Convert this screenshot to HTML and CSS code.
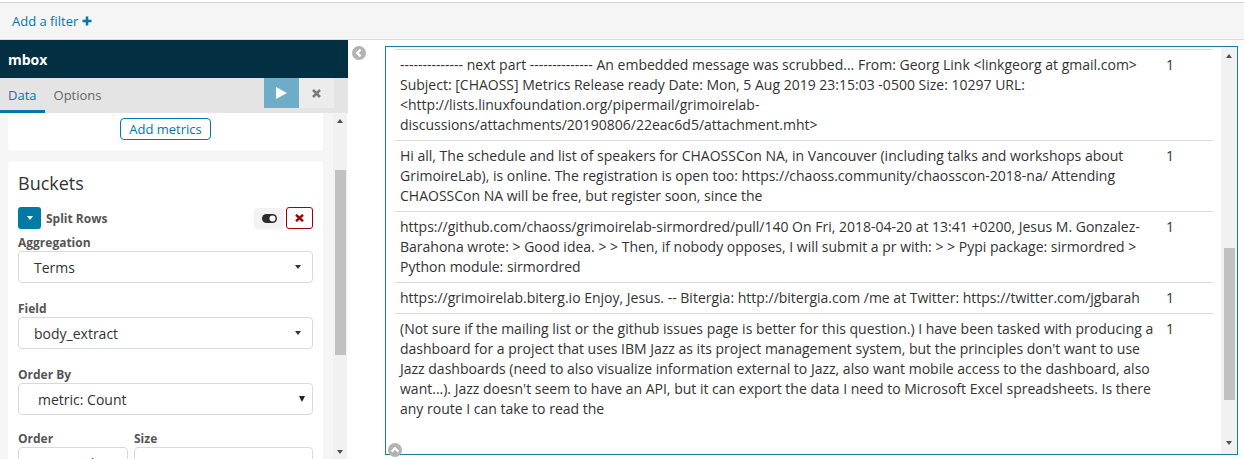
FILE: index.html
```html
<!DOCTYPE html>
<html>
<head>
<meta charset="utf-8">
<title>mbox</title>
<link rel="stylesheet" href="styles.css">
</head>
<body>
<div class="topbar">
  <span class="add-filter">Add a filter
    <svg class="plus-icon" width="10" height="10" viewBox="0 0 10 10"><path d="M5 0.5V9.5M0.5 5H9.5" stroke="#0079a5" stroke-width="2.6"/></svg>
  </span>
</div>
<div class="main">
  <aside class="sidebar">
    <div class="sb-title">mbox</div>
    <div class="sb-tabs">
      <div class="tab active">Data</div>
      <div class="tab">Options</div>
      <div class="spacer"></div>
      <div class="btn-apply"><svg width="11" height="12" viewBox="0 0 11 12"><polygon points="0,0 11,6 0,12" fill="#fff"/></svg></div>
      <div class="btn-discard"><svg width="9" height="9" viewBox="0 0 9 9"><path d="M1 1L8 8M8 1L1 8" stroke="#7a7a7a" stroke-width="2.6"/></svg></div>
    </div>
    <div class="sb-body">
      <div class="sb-scroll">
        <div class="card card-metrics">
          <span class="btn-add">Add metrics</span>
        </div>
        <div class="card card-buckets">
          <h2 class="card-title">Buckets</h2>
          <div class="agg-row">
            <span class="btn-caret"><span class="tri-down-white"></span></span>
            <span class="agg-name">Split Rows</span>
            <span class="spacer"></span>
            <span class="btn-toggle"><svg width="15" height="9" viewBox="0 0 15 9"><rect x="0" y="0" width="15" height="9" rx="4.5" fill="#2b2b2b"/><circle cx="10.5" cy="4.5" r="3" fill="#fff"/></svg></span>
            <span class="btn-remove"><svg width="9" height="8" viewBox="0 0 9 8"><path d="M1 0.8L8 7.2M8 0.8L1 7.2" stroke="#a30000" stroke-width="2.4"/></svg></span>
          </div>
          <div class="form-group first">
            <div class="label">Aggregation</div>
            <div class="select"><span>Terms</span><span class="caret"></span></div>
          </div>
          <div class="form-group">
            <div class="label">Field</div>
            <div class="select"><span>body_extract</span><span class="caret"></span></div>
          </div>
          <div class="form-group">
            <div class="label">Order By</div>
            <div class="select native"><span>metric: Count</span><span class="caret big"></span></div>
          </div>
          <div class="form-row">
            <div class="form-col">
              <div class="label">Order</div>
              <div class="select native"><span>Descending</span><span class="caret big"></span></div>
            </div>
            <div class="form-col">
              <div class="label">Size</div>
              <div class="input"><span>100</span></div>
            </div>
          </div>
        </div>
      </div>
      <div class="scrollbar sb-scrollbar">
        <span class="arrow-box"><span class="tri-up"></span></span>
        <span class="thumb"></span>
        <span class="spacer"></span>
        <span class="arrow-box bottom"><span class="tri-down"></span></span>
      </div>
    </div>
  </aside>
  <section class="content">
    <span class="collapse-icon"><svg width="14" height="14" viewBox="0 0 14 14"><circle cx="7" cy="7" r="7" fill="#b3b3b3"/><path d="M8.6 3.6L5.2 7L8.6 10.4" stroke="#fff" stroke-width="2.2" fill="none"/></svg></span>
    <div class="panel">
      <div class="table-wrap">
        <table class="data-table">
          <colgroup><col><col class="count-col"></colgroup>
          <tbody>
            <tr>
              <td>-------------- next part -------------- An embedded message was scrubbed... From: Georg Link &lt;linkgeorg at gmail.com&gt; Subject: [CHAOSS] Metrics Release ready Date: Mon, 5 Aug 2019 23:15:03 -0500 Size: 10297 URL: &lt;http://lists.linuxfoundation.org/pipermail/grimoirelab-discussions/attachments/20190806/22eac6d5/attachment.mht&gt;</td>
              <td>1</td>
            </tr>
            <tr>
              <td>Hi all, The schedule and list of speakers for CHAOSSCon NA, in Vancouver (including talks and workshops about GrimoireLab), is online. The registration is open too: https://chaoss.community/chaosscon-2018-na/ Attending CHAOSSCon NA will be free, but register soon, since the</td>
              <td>1</td>
            </tr>
            <tr>
              <td>https://github.com/chaoss/grimoirelab-sirmordred/pull/140 On Fri, 2018-04-20 at 13:41 +0200, Jesus M. Gonzalez-Barahona wrote: &gt; Good idea. &gt; &gt; Then, if nobody opposes, I will submit a pr with: &gt; &gt; Pypi package: sirmordred &gt; Python module: sirmordred</td>
              <td>1</td>
            </tr>
            <tr>
              <td>https://grimoirelab.biterg.io Enjoy, Jesus. -- Bitergia: http://bitergia.com /me at Twitter: https://twitter.com/jgbarah</td>
              <td>1</td>
            </tr>
            <tr>
              <td>(Not sure if the mailing list or the github issues page is better for this question.) I have been tasked with producing a dashboard for a project that uses IBM Jazz as its project management system, but the principles don't want to use Jazz dashboards (need to also visualize information external to Jazz, also want mobile access to the dashboard, also want...). Jazz doesn't seem to have an API, but it can export the data I need to Microsoft Excel spreadsheets. Is there any route I can take to read the</td>
              <td>1</td>
            </tr>
          </tbody>
        </table>
      </div>
      <div class="scrollbar panel-scrollbar">
        <span class="arrow-box tall"><span class="tri-up"></span></span>
        <span class="thumb"></span>
        <span class="spacer"></span>
        <span class="arrow-box tall bottom"><span class="tri-down"></span></span>
      </div>
      <span class="expand-icon"><svg width="14" height="14" viewBox="0 0 14 14"><circle cx="7" cy="7" r="7" fill="#b3b3b3"/><path d="M3.6 8.6L7 5.2L10.4 8.6" stroke="#fff" stroke-width="2.2" fill="none"/></svg></span>
    </div>
  </section>
</div>
</body>
</html>
```
FILE: styles.css
```css
* { box-sizing: border-box; }
html, body { margin: 0; height: 100%; }
body {
  font-family: "Open Sans", "DejaVu Sans", sans-serif;
  color: #333;
  background: #fff;
  overflow: hidden;
}
.spacer { flex: 1; }

/* top filter bar */
.topbar {
  margin-top: 2px;
  height: 38px;
  border-top: 1px solid #d4d4d4;
  border-bottom: 1px solid #dadada;
  background: #f5f5f5;
  display: flex;
  align-items: center;
  padding-left: 12px;
}
.add-filter {
  font-size: 13px;
  color: #0079a5;
  display: flex;
  align-items: center;
  gap: 4px;
}
.plus-icon { display: block; }

.main {
  display: flex;
  height: 419px;
}

/* sidebar */
.sidebar {
  width: 348px;
  display: flex;
  flex-direction: column;
}
.sb-title {
  height: 38px;
  background: #022f41;
  color: #fff;
  font-size: 14px;
  font-weight: 700;
  padding-left: 8px;
  display: flex;
  align-items: center;
}
.sb-tabs {
  height: 35px;
  background: #e4e4e4;
  display: flex;
  align-items: flex-start;
  padding-right: 14px;
}
.tab {
  line-height: 35px;
  height: 35px;
  font-size: 13px;
  padding: 0 8px;
  color: #666;
}
.tab.active {
  color: #0079a5;
  box-shadow: inset 0 -3px 0 #0079a5;
  margin-right: 1px;
}
.btn-apply, .btn-discard {
  width: 35px;
  height: 30px;
  display: flex;
  align-items: center;
  justify-content: center;
}
.btn-apply { background: #6eadc7; }
.btn-discard { background: #ececec; }

.sb-body {
  flex: 1;
  display: flex;
  min-height: 0;
}
.sb-scroll {
  width: 333px;
  background: #f5f5f5;
  padding: 0 10px 0 8px;
  overflow: hidden;
}
.card {
  background: #fff;
  border-radius: 4px;
}
.card-metrics {
  border-radius: 0 0 4px 4px;
  padding: 5px 0 11px;
  margin-bottom: 10px;
  display: flex;
  justify-content: center;
}
.btn-add {
  height: 22px;
  line-height: 20px;
  padding: 0 8px;
  font-size: 13px;
  color: #0079a5;
  border: 1px solid #0079a5;
  border-radius: 4px;
  background: #fff;
}
.card-buckets {
  padding: 10px 10px 20px;
}
.card-title {
  margin: 0;
  font-size: 18px;
  line-height: 24px;
  font-weight: 400;
  color: #333;
}
.agg-row {
  margin-top: 12px;
  height: 22px;
  display: flex;
  align-items: center;
}
.btn-caret {
  width: 23px;
  height: 22px;
  background: #0079a5;
  border-radius: 3px;
  display: flex;
  align-items: center;
  justify-content: center;
}
.tri-down-white {
  width: 0; height: 0;
  border-left: 3.5px solid transparent;
  border-right: 3.5px solid transparent;
  border-top: 4px solid #fff;
}
.agg-name {
  margin-left: 5px;
  font-size: 12px;
  font-weight: 700;
  color: #555;
}
.btn-toggle {
  width: 30px;
  height: 21px;
  background: #f2f2f2;
  border-radius: 3px;
  display: flex;
  align-items: center;
  justify-content: center;
}
.btn-remove {
  margin-left: 2px;
  width: 27px;
  height: 22px;
  border: 1px solid #a30000;
  border-radius: 3px;
  display: flex;
  align-items: center;
  justify-content: center;
  background: #fff;
}
.form-group { margin-top: 17px; }
.form-group.first { margin-top: 5px; }
.label {
  font-size: 12px;
  line-height: 17px;
  font-weight: 700;
  color: #555;
}
.select, .input {
  height: 32px;
  border: 1px solid #d9d9d9;
  border-radius: 4px;
  display: flex;
  align-items: center;
  justify-content: space-between;
  padding: 0 11px 0 15px;
  font-size: 14px;
  color: #333;
}
.select.native { padding: 0 7px 0 19px; }
.input { padding-left: 16px; }
.caret {
  width: 0; height: 0;
  border-left: 3.5px solid transparent;
  border-right: 3.5px solid transparent;
  border-top: 4px solid #333;
}
.caret.big {
  border-left-width: 3px;
  border-right-width: 3px;
  border-top: 6px solid #222;
}
.form-row {
  margin-top: 15px;
  display: grid;
  grid-template-columns: 110px 1fr;
  column-gap: 6px;
}

/* scrollbars */
.scrollbar {
  background: #f1f1f1;
  display: flex;
  flex-direction: column;
  align-items: center;
}
.sb-scrollbar { width: 14px; }
.arrow-box {
  height: 16px;
  width: 100%;
  display: flex;
  align-items: center;
  justify-content: center;
}
.arrow-box.bottom { height: 14px; }
.tri-up {
  width: 0; height: 0;
  border-left: 3.5px solid transparent;
  border-right: 3.5px solid transparent;
  border-bottom: 4px solid #505050;
}
.tri-down {
  width: 0; height: 0;
  border-left: 3.5px solid transparent;
  border-right: 3.5px solid transparent;
  border-top: 4px solid #505050;
}
.thumb {
  background: #c1c1c1;
}
.sb-scrollbar .thumb {
  width: 11px;
  margin-top: 41px;
  height: 185px;
}

/* content */
.content {
  flex: 1;
  display: flex;
  align-items: flex-start;
  padding: 6px 6px 4px 4px;
  gap: 19px;
  height: 100%;
}
.collapse-icon { display: block; line-height: 0; }
.panel {
  position: relative;
  flex: 1;
  height: 100%;
  border: 1px solid #1a7ca3;
  display: flex;
}
.table-wrap {
  flex: 1;
  padding: 2px 8px 0 9px;
  overflow: hidden;
}
.data-table {
  width: 100%;
  table-layout: fixed;
  border-collapse: collapse;
  border-top: 1px solid #dcdcdc;
  font-size: 14px;
  line-height: 20px;
  color: #333;
}
.count-col { width: 52px; }
.data-table td {
  padding: 5px;
  vertical-align: top;
  border-bottom: 1px solid #dcdcdc;
}
.data-table tr:last-child td { border-bottom: none; }

.panel-scrollbar { width: 16px; }
.arrow-box.tall { height: 18px; }
.arrow-box.tall.bottom { height: 18px; margin-bottom: 2px; }
.panel-scrollbar .thumb {
  width: 11px;
  margin-top: 183px;
  height: 152px;
}
.expand-icon {
  position: absolute;
  left: 2px;
  bottom: -3px;
  line-height: 0;
}
```
